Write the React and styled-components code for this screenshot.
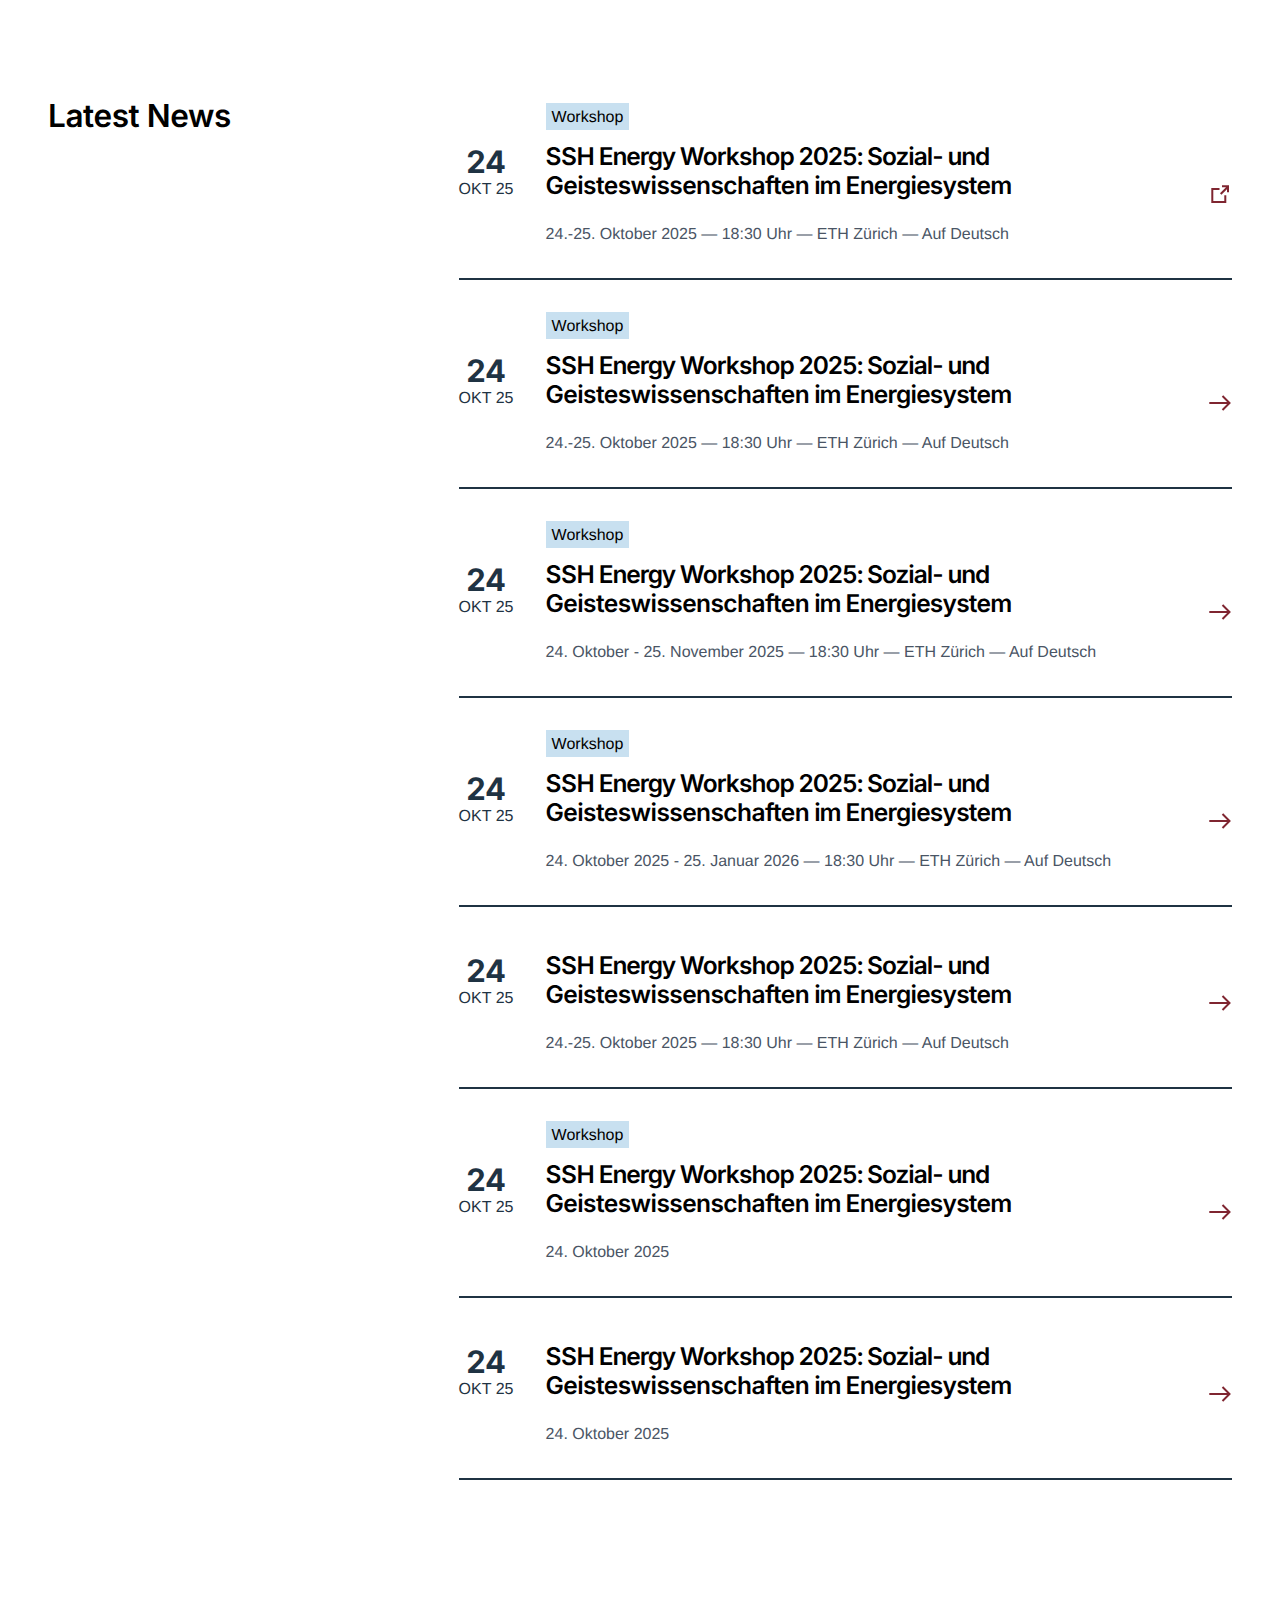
import React from "react";
import styled, { createGlobalStyle } from "styled-components";

const GlobalStyle = createGlobalStyle`
  *, *::before, *::after { box-sizing: border-box; }
  body { margin: 0; background: #fff; color: #000; font-family: "Liberation Sans", Arial, sans-serif; font-size: 16px; text-rendering: geometricPrecision; }
`;

const Section = styled.section`
  display: grid;
  grid-template-columns: 379px 773px;
  column-gap: 32px;
  padding: 71px 48px 144px;
`;

const Heading = styled.h2`
  margin: 0;
  padding-top: 25px;
  font: 600 31.5px/40px Inter, sans-serif;
  letter-spacing: -0.42px;
`;

const List = styled.ul`
  margin: 0;
  padding: 0;
  list-style: none;
`;

const Item = styled.li`
  display: grid;
  grid-template-columns: 54.6px 1fr 24px;
  column-gap: 32px;
  height: ${(p) => (p.$tagged ? 209 : 182)}px;
  padding-top: ${(p) => (p.$tagged ? 32 : 5)}px;
  border-bottom: 2px solid #1f3343;
`;

const DateBox = styled.div`
  display: flex;
  flex-direction: column;
  align-items: center;
  width: 54px;
  padding-top: 43px;
  color: #1f3343;
`;

const Day = styled.span`
  font: 700 31px/34px Inter, sans-serif;
  letter-spacing: -0.2px;
`;

const Month = styled.span`
  line-height: 20px;
  white-space: nowrap;
`;

const Body = styled.div`
  display: flex;
  flex-direction: column;
  align-items: flex-start;
`;

const Tag = styled.span`
  height: 27px;
  padding: 1px 5.7px 0 6px;
  line-height: 27px;
  background: #c8e0f0;
  visibility: ${(p) => (p.$hidden ? "hidden" : "visible")};
`;

const Title = styled.h3`
  margin: 12px 0 0;
  font: 600 24.5px/29px Inter, sans-serif;
  font-feature-settings: "calt" 0, "liga" 0;
`;

const Line = styled.span`
  display: flex;
`;

const Word = styled.span`
  flex: none;
  width: ${(p) => p.$width}px;
  letter-spacing: ${(p) => p.$tracking}px;
  white-space: pre;
`;

const Meta = styled.p`
  margin: 25px 0 0;
  line-height: 20px;
  color: #4a5565;
  white-space: nowrap;
`;

const IconSlot = styled.span`
  padding-top: 79px;
  color: #7f2530;
  svg { display: block; }
`;

const ArrowIcon = () => (
  <svg width="24" height="24" viewBox="0 0 24 24" fill="none" stroke="currentColor" strokeWidth="2">
    <path d="M1.3 12H21.5M14.5 5l7 7-7 7" />
  </svg>
);

const ExternalIcon = () => (
  <svg width="24" height="24" viewBox="0 0 24 24" fill="none" stroke="currentColor" strokeWidth="2">
    <path d="M11.5 7H4.3V20H17.3V13.2M12.7 12l7-7M14 4.3h6v6" />
  </svg>
);

const titleLines = [
  [
    ["SSH ", 53.2, -0.5],
    ["Energy ", 81, -1.15],
    ["Workshop ", 118.8, -0.9],
    ["2025: ", 68.4, -1.1],
    ["Sozial- ", 80.6, -1],
    ["und", 44, -1.3],
  ],
  [
    ["Geisteswissenschaften ", 268.6, -0.58],
    ["im ", 31.4, -1.1],
    ["Energiesystem", 168, -0.78],
  ],
];

const FULL = "24.-25. Oktober 2025 — 18:30 Uhr — ETH Zürich — Auf Deutsch";

const items = [
  { tagged: true, external: true, meta: FULL },
  { tagged: true, meta: FULL },
  { tagged: true, meta: "24. Oktober - 25. November 2025 — 18:30 Uhr — ETH Zürich — Auf Deutsch" },
  { tagged: true, meta: "24. Oktober 2025 - 25. Januar 2026 — 18:30 Uhr — ETH Zürich — Auf Deutsch" },
  { tagged: false, meta: FULL },
  { tagged: true, meta: "24. Oktober 2025" },
  { tagged: false, meta: "24. Oktober 2025" },
];

const NewsItem = ({ tagged, external, meta }) => (
  <Item $tagged={tagged}>
    <DateBox>
      <Day>24</Day>
      <Month>OKT 25</Month>
    </DateBox>
    <Body>
      <Tag $hidden={!tagged}>{tagged ? "Workshop" : ""}</Tag>
      <Title>
        {titleLines.map((words, i) => (
          <Line key={i}>
            {words.map(([text, width, tracking]) => (
              <Word key={text} $width={width} $tracking={tracking}>{text}</Word>
            ))}
          </Line>
        ))}
      </Title>
      <Meta>{meta}</Meta>
    </Body>
    <IconSlot>{external ? <ExternalIcon /> : <ArrowIcon />}</IconSlot>
  </Item>
);

export default function App() {
  return (
    <>
      <GlobalStyle />
      <Section>
        <Heading>Latest News</Heading>
        <List>
          {items.map((item, i) => (
            <NewsItem key={i} {...item} />
          ))}
        </List>
      </Section>
    </>
  );
}
